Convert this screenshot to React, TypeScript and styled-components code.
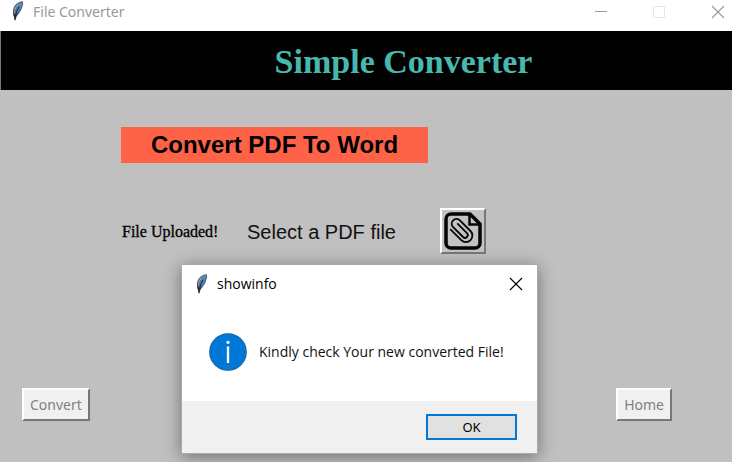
import React from "react";
import styled, { createGlobalStyle } from "styled-components";

const Global = createGlobalStyle`
  * { box-sizing: border-box; }
  body { margin: 0; background: #c0c0c0; font-family: "Open Sans", "Noto Sans", sans-serif; }
  button { padding: 0; border: 0; background: none; color: inherit; font: inherit; }
  h1, h2, p { margin: 0; }
  svg { display: block; flex: none; }
`;

const Window = styled.div`
  position: relative;
  min-height: 100vh;
  overflow: hidden;
  display: flex;
  flex-direction: column;
  background: #c0c0c0;
`;

const TitleBar = styled.header`
  display: flex;
  align-items: flex-start;
  gap: 8px;
  height: 31px;
  padding: 0 7px 0 10px;
  background: #fff;
  color: #999;
`;

const WindowTitle = styled.span`
  flex: 1;
  font: 14px/24px "Noto Sans", sans-serif;
`;

const WindowControls = styled.div`
  display: flex;
  gap: 44px;
  padding: 5px 0 0;
`;

const ControlButton = styled.button`
  display: block;
  width: 14px;
  height: 14px;
`;

const Banner = styled.div`
  height: 59px;
  padding-left: 74px;
  border-left: 1px solid #777;
  background: #000;
  text-align: center;
`;

const BannerTitle = styled.h1`
  color: #48b8ae;
  font: bold 34px/62px "Liberation Serif", serif;
`;

const Content = styled.main`
  flex: 1;
  display: flex;
  flex-direction: column;
  padding: 37px 60px 41px 22px;
`;

const Section = styled.section`
  display: flex;
  flex-direction: column;
  align-items: flex-start;
  gap: 45px;
  padding-left: 99px;
`;

const Heading = styled.h2`
  width: 307px;
  background: #ff6347;
  color: #000;
  font: bold 24px/36px "Liberation Sans", sans-serif;
  text-align: center;
`;

const FileRow = styled.div`
  display: flex;
  align-items: center;
  color: #111;
`;

const Status = styled.p`
  width: 126px;
  padding: 2px 0 0 1px;
  font: 16px/28px "Liberation Serif", serif;
  -webkit-text-stroke: 0.3px;
  color: #000;
`;

const Prompt = styled.label`
  width: 193px;
  padding-top: 2px;
  font: 20px/24px "Liberation Sans", sans-serif;
`;

const raised = `
  border: 2px solid;
  border-color: #fff #777 #777 #fff;
`;

const AttachButton = styled.button`
  display: grid;
  place-items: center;
  width: 46px;
  height: 46px;
  ${raised}
  background: #c3c3c3;
`;

const Actions = styled.footer`
  display: flex;
  justify-content: space-between;
  margin-top: auto;
`;

const ActionButton = styled.button`
  height: 33px;
  padding: 0 6px;
  ${raised}
  background: #f0f0f0;
  color: #808080;
  font: 14px/28px "Noto Sans", sans-serif;
`;

const Dialog = styled.div`
  position: absolute;
  top: 265px;
  left: 182px;
  width: 355px;
  background: #fff;
  box-shadow: 0 0 0 1px #aaa, 0 3px 16px 1px rgba(0, 0, 0, 0.42);
`;

const DialogBar = styled.div`
  display: flex;
  align-items: center;
  gap: 8px;
  height: 38px;
  padding: 0 14px 0 12px;
`;

const DialogTitle = styled.span`
  flex: 1;
  color: #000;
  font: 14px/24px "Open Sans", sans-serif;
`;

const DialogBody = styled.div`
  display: flex;
  align-items: center;
  gap: 12px;
  height: 98px;
  padding: 0 27px;
`;

const Message = styled.p`
  white-space: nowrap;
  color: #111;
  font: 14px/20px "Open Sans", sans-serif;
`;

const DialogFooter = styled.div`
  display: flex;
  justify-content: flex-end;
  padding: 13px 20px;
  background: #f0f0f0;
`;

const OkButton = styled.button`
  width: 91px;
  height: 26px;
  border: 2px solid #0078d7;
  background: #e1e1e1;
  color: #000;
  font: 13px/22px "Noto Sans", sans-serif;
`;

const Feather = () => (
  <svg width="15" height="22" viewBox="0 0 15 22" aria-hidden="true">
    <path d="M12.8 1.2C8.4 1 4 4.8 2.9 10L3 15l1.4 1.6 3.4-1.4 3.6-5.4 1.7-5.6Z" fill="#4f5a66" />
    <path d="M12.2 2C8.6 3 6.2 7.2 5 14.6L7.8 13l2.9-4.4L12.3 4Z" fill="#4f8ad0" />
    <path d="M10.4 2.2C6.8 4 4.4 7.3 4 10.8l.1 2.6C5.2 8.8 7.4 5.2 10.4 2.2Z" fill="#a3afbb" />
    <path d="M9.2 6.5C7.2 9.8 6 13 5.4 16" fill="none" stroke="#1b2a40" strokeWidth="1.1" />
    <path d="m3.5 14.6 3.6.2-1.7 5.8-.9-.3Z" fill="#292929" />
  </svg>
);

const Cross = () => (
  <svg width="14" height="14" viewBox="0 0 14 14" aria-hidden="true">
    <path d="m1 1 12 12M13 1 1 13" fill="none" stroke="currentColor" strokeWidth="1.1" />
  </svg>
);

const Minimise = () => (
  <svg width="14" height="14" viewBox="0 0 14 14" aria-hidden="true">
    <path d="M0 6.5h12" stroke="currentColor" />
  </svg>
);

const Maximise = () => (
  <svg width="14" height="14" viewBox="0 0 14 14" aria-hidden="true">
    <path d="M.5 1.5h11v11H.5Z" fill="none" stroke="#e6e6e6" />
  </svg>
);

const Attachment = () => (
  <svg width="40" height="40" viewBox="0 0 40 40" fill="none" stroke="#050505" aria-hidden="true">
    <path d="M8 3h19l10 10v19a5 5 0 0 1-5 5H8a5 5 0 0 1-5-5V8a5 5 0 0 1 5-5Z" strokeWidth="3.5" strokeLinejoin="round" />
    <path d="M26.5 4v9.5H36" strokeWidth="2.5" />
    <g transform="translate(19 20) rotate(45)">
      <path d="M-9 7H6A6.5 6.5 0 0 0 6-6H-9A4.75 4.75 0 0 0-9 3.5H5A2.75 2.75 0 0 0 5-2H-8" strokeWidth="1.8" strokeLinecap="round" />
    </g>
  </svg>
);

const Info = () => (
  <svg width="38" height="38" viewBox="0 0 38 38" role="img" aria-label="Information">
    <circle cx="19" cy="19" r="18.2" fill="#0078d7" stroke="#1766a6" strokeWidth="1.3" />
    <circle cx="19" cy="9.3" r="1.6" fill="#fff" />
    <path d="M19 13.5v16.5" stroke="#fff" strokeWidth="2.3" />
  </svg>
);

export default function App() {
  return (
    <Window>
      <Global />
      <TitleBar>
        <Feather />
        <WindowTitle>File Converter</WindowTitle>
        <WindowControls>
          <ControlButton aria-label="Minimise"><Minimise /></ControlButton>
          <ControlButton aria-label="Maximise"><Maximise /></ControlButton>
          <ControlButton aria-label="Close"><Cross /></ControlButton>
        </WindowControls>
      </TitleBar>
      <Banner><BannerTitle>Simple Converter</BannerTitle></Banner>
      <Content>
        <Section>
          <Heading>Convert PDF To Word</Heading>
          <FileRow>
            <Status>File Uploaded!</Status>
            <Prompt htmlFor="attach">Select a PDF file</Prompt>
            <AttachButton id="attach"><Attachment /></AttachButton>
          </FileRow>
        </Section>
        <Actions>
          <ActionButton>Convert</ActionButton>
          <ActionButton>Home</ActionButton>
        </Actions>
      </Content>
      <Dialog role="dialog" aria-labelledby="dialog-title">
        <DialogBar>
          <Feather />
          <DialogTitle id="dialog-title">showinfo</DialogTitle>
          <ControlButton aria-label="Close dialog"><Cross /></ControlButton>
        </DialogBar>
        <DialogBody>
          <Info />
          <Message>Kindly check Your new converted File!</Message>
        </DialogBody>
        <DialogFooter><OkButton>OK</OkButton></DialogFooter>
      </Dialog>
    </Window>
  );
}
